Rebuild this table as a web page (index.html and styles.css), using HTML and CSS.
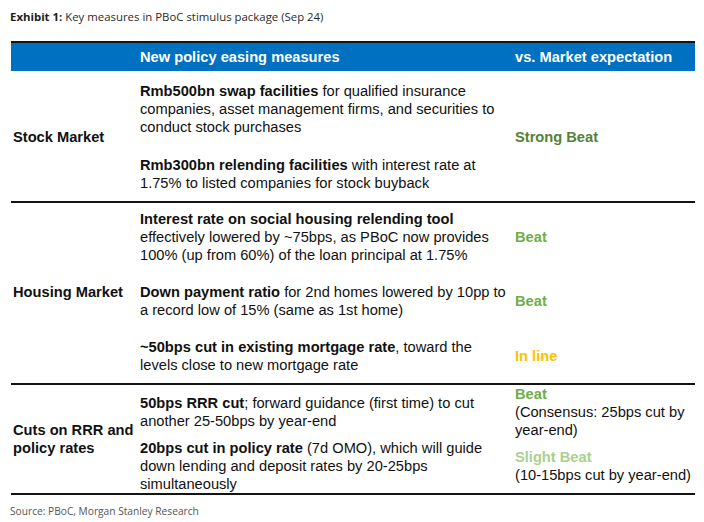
FILE: index.html
```html
<!DOCTYPE html>
<html lang="en">
<head>
<meta charset="utf-8">
<title>Exhibit 1</title>
<link rel="stylesheet" href="styles.css">
</head>
<body>
<div class="page">
  <p class="title"><b>Exhibit 1:</b> Key measures in PBoC stimulus package (Sep 24)</p>
  <table class="measures">
    <colgroup>
      <col class="c1">
      <col class="c2">
      <col class="c3">
    </colgroup>
    <thead>
      <tr>
        <th></th>
        <th>New policy easing measures</th>
        <th>vs. Market expectation</th>
      </tr>
    </thead>
    <tbody class="stock">
      <tr>
        <td rowspan="2" class="label">Stock Market</td>
        <td><b>Rmb500bn swap facilities</b> for qualified insurance companies, asset management firms, and securities to conduct stock purchases</td>
        <td rowspan="2" class="exp strong">Strong Beat</td>
      </tr>
      <tr>
        <td><b>Rmb300bn relending facilities</b> with interest rate at 1.75% to listed companies for stock buyback</td>
      </tr>
    </tbody>
    <tbody class="housing">
      <tr class="first">
        <td rowspan="3" class="label">Housing Market</td>
        <td><b>Interest rate on social housing relending tool</b> effectively lowered by ~75bps, as PBoC now provides 100% (up from 60%) of the loan principal at 1.75%</td>
        <td class="exp beat">Beat</td>
      </tr>
      <tr>
        <td><b>Down payment ratio</b> for 2nd homes lowered by 10pp to a record low of 15% (same as 1st home)</td>
        <td class="exp beat">Beat</td>
      </tr>
      <tr>
        <td><b>~50bps cut in existing mortgage rate</b>, toward the levels close to new mortgage rate</td>
        <td class="exp inline">In line</td>
      </tr>
    </tbody>
    <tbody class="cuts">
      <tr>
        <td rowspan="2" class="label">Cuts on RRR and policy rates</td>
        <td><b>50bps RRR cut</b>; forward guidance (first time) to cut another 25-50bps by year-end</td>
        <td class="exp"><span class="beat">Beat</span><br>(Consensus: 25bps cut by year-end)</td>
      </tr>
      <tr>
        <td><b>20bps cut in policy rate</b> (7d OMO), which will guide down lending and deposit rates by 20-25bps simultaneously</td>
        <td class="exp"><span class="slight">Slight Beat</span><br>(10-15bps cut by year-end)</td>
      </tr>
    </tbody>
  </table>
  <p class="source">Source: PBoC, Morgan Stanley Research</p>
</div>
</body>
</html>
```
FILE: styles.css
```css
html, body {
  margin: 0;
  padding: 0;
  background: #ffffff;
}

.page {
  padding: 9px 9px 0 10px;
}

.title {
  margin: 0;
  font-family: "Open Sans", "Noto Sans", sans-serif;
  font-size: 11.4px;
  line-height: 15px;
  color: #2b2b2b;
}

.title b {
  font-weight: 700;
  color: #1e1e1e;
}

.measures {
  margin: 17px 0 0 1px;
  width: 684px;
  border-collapse: collapse;
  table-layout: fixed;
  font-family: "Liberation Sans", Arial, sans-serif;
  font-size: 14.67px;
  line-height: 18px;
  color: #111111;
  border-top: 2px solid #141414;
  border-bottom: 2px solid #141414;
}

.c1 { width: 127px; }
.c2 { width: 375px; }
.c3 { width: 182px; }

.measures th {
  background: #0070c0;
  color: #ffffff;
  font-weight: 700;
  text-align: left;
  height: 29px;
  padding: 0 2px;
  box-sizing: border-box;
  vertical-align: middle;
}

.measures td {
  padding: 9px 2px;
  vertical-align: middle;
  text-align: left;
}

.measures b {
  font-weight: 700;
}

.measures tbody + tbody {
  border-top: 2px solid #141414;
}

.stock td {
  padding: 11px 2px 9px;
}

.housing td {
  padding: 10px 2px 9px;
}

.housing .first td {
  padding-top: 7px;
}

.cuts td {
  padding: 0 2px;
}

.measures td.label {
  font-weight: 700;
}

.exp .beat,
.exp.beat {
  color: #70ad47;
  font-weight: 700;
}

.exp.strong {
  color: #548235;
  font-weight: 700;
}

.exp.inline {
  color: #ffc000;
  font-weight: 700;
}

.exp .slight {
  color: #a9d18e;
  font-weight: 700;
}

.source {
  margin: 9px 0 0 0;
  font-family: "Open Sans", "Noto Sans", sans-serif;
  font-size: 10.2px;
  line-height: 14px;
  color: #555555;
}
```
